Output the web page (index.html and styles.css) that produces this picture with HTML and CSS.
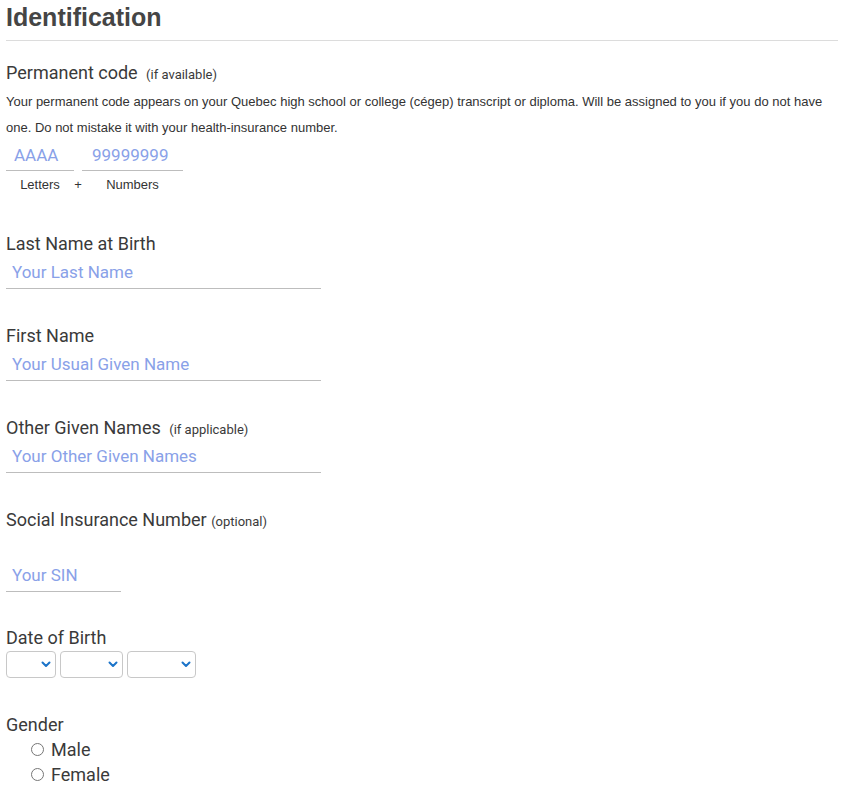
FILE: index.html
```html
<!DOCTYPE html>
<html lang="en">
<head>
<meta charset="utf-8">
<title>Identification</title>
<link rel="stylesheet" href="styles.css">
</head>
<body>
<div class="page">
  <h1 class="title">Identification</h1>
  <div class="rule"></div>

  <section class="field field-code">
    <div class="label">Permanent code <span class="note">(if available)</span></div>
    <p class="desc">Your permanent code appears on your Quebec high school or college (cégep) transcript or diploma. Will be assigned to you if you do not have one. Do not mistake it with your health-insurance number.</p>
    <div class="code-grid">
      <input class="line-input code-letters" type="text" placeholder="AAAA">
      <span></span>
      <input class="line-input code-numbers" type="text" placeholder="99999999">
      <span class="code-cap">Letters</span>
      <span class="code-cap">+</span>
      <span class="code-cap">Numbers</span>
    </div>
  </section>

  <section class="field field-text">
    <div class="label">Last Name at Birth</div>
    <input class="line-input wide" type="text" placeholder="Your Last Name">
  </section>

  <section class="field field-text">
    <div class="label">First Name</div>
    <input class="line-input wide" type="text" placeholder="Your Usual Given Name">
  </section>

  <section class="field field-text">
    <div class="label">Other Given Names <span class="note">(if applicable)</span></div>
    <input class="line-input wide" type="text" placeholder="Your Other Given Names">
  </section>

  <section class="field">
    <div class="label">Social Insurance Number <span class="note note-tight">(optional)</span></div>
    <input class="line-input sin" type="text" placeholder="Your SIN">
  </section>

  <section class="field field-dob">
    <div class="label">Date of Birth</div>
    <div class="dob">
      <div class="select s-day"><svg width="10" height="7" viewBox="0 0 10 7"><path d="M1.5 1.5 L5 5 L8.5 1.5" fill="none" stroke="#1b74c9" stroke-width="2" stroke-linecap="round" stroke-linejoin="round"/></svg></div>
      <div class="select s-month"><svg width="10" height="7" viewBox="0 0 10 7"><path d="M1.5 1.5 L5 5 L8.5 1.5" fill="none" stroke="#1b74c9" stroke-width="2" stroke-linecap="round" stroke-linejoin="round"/></svg></div>
      <div class="select s-year"><svg width="10" height="7" viewBox="0 0 10 7"><path d="M1.5 1.5 L5 5 L8.5 1.5" fill="none" stroke="#1b74c9" stroke-width="2" stroke-linecap="round" stroke-linejoin="round"/></svg></div>
    </div>
  </section>

  <section class="field">
    <div class="label">Gender</div>
    <div class="radios">
      <label class="radio"><span class="dot"></span>Male</label>
      <label class="radio"><span class="dot"></span>Female</label>
    </div>
  </section>
</div>
</body>
</html>
```

FILE: styles.css
```css
* { box-sizing: border-box; }
html, body { margin: 0; padding: 0; background: #fff; }
body {
  font-family: Roboto, "Liberation Sans", Arial, sans-serif;
  color: #3a3a3a;
}
.page {
  padding: 0 3px 0 6px;
  width: 841px;
}
.title {
  font-family: "Liberation Sans", Arial, sans-serif;
  font-weight: bold;
  font-size: 25px;
  line-height: 34px;
  color: #454545;
  margin: 0;
}
.rule {
  border-top: 1px solid #dcdcdc;
  margin-top: 6px;
  width: 832px;
}
.field {
  display: flex;
  flex-direction: column;
  align-items: flex-start;
  margin-bottom: 34px;
}
.field-text { margin-bottom: 35px; }
.field-code { margin-top: 20px; margin-bottom: 40px; }
.field-dob { margin-bottom: 35px; }
.label {
  font-size: 18px;
  line-height: 24px;
  color: #3a3a3a;
}
.note {
  font-size: 13px;
  line-height: 1;
  margin-left: 4px;
}
.note-tight { margin-left: 0; }
.desc {
  font-family: "Liberation Sans", Arial, sans-serif;
  font-size: 13px;
  line-height: 26px;
  color: #333;
  margin: 4px 0 0;
  width: 828px;
}
.line-input {
  font-family: Roboto, "Liberation Sans", Arial, sans-serif;
  font-size: 17px;
  color: #333;
  height: 33px;
  border: none;
  border-bottom: 1px solid #bdbdbd;
  outline: none;
  background: transparent;
  padding: 0 6px;
  margin: 0;
}
.line-input::placeholder { color: #89a1e8; opacity: 1; }
.wide { width: 315px; }
.sin { width: 115px; margin-top: 27px; }
.code-grid {
  display: grid;
  grid-template-columns: 68px 8px 101px;
  grid-template-rows: 32px 16px;
  row-gap: 5px;
  align-items: center;
  margin-top: -2px;
}
.code-letters { width: 68px; height: 32px; padding-left: 8px; }
.code-numbers { width: 101px; height: 32px; padding-left: 10px; }
.code-cap {
  font-family: "Liberation Sans", Arial, sans-serif;
  font-size: 13px;
  text-align: center;
  color: #333;
}
.dob {
  display: flex;
  gap: 4px;
  margin-top: 1px;
}
.select {
  height: 27px;
  border: 1px solid #c8c8c8;
  border-radius: 4px;
  display: flex;
  align-items: center;
  justify-content: flex-end;
  padding-right: 4px;
}
.s-day { width: 50px; }
.s-month { width: 63px; }
.s-year { width: 69px; }
.radios {
  display: flex;
  flex-direction: column;
  padding-left: 25px;
  margin-top: 0;
}
.radio {
  display: flex;
  align-items: center;
  font-size: 18px;
  line-height: 25px;
  color: #3a3a3a;
}
.dot {
  width: 13px;
  height: 13px;
  border: 1px solid #767676;
  border-radius: 50%;
  margin-right: 7px;
  background: #fff;
}
```
